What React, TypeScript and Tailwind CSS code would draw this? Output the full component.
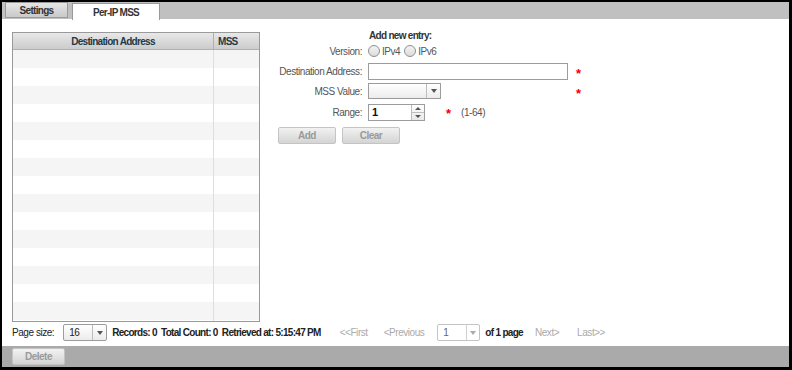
import React from "react";

const font = { fontFamily: '"Liberation Sans", Arial, sans-serif' };

function Star({ className = "" }: { className?: string }) {
  return <span className={"text-[#e00] text-[13px] font-bold leading-none tracking-normal " + className}>*</span>;
}

function Radio({ label }: { label: string }) {
  return (
    <span className="flex items-center gap-[2px]">
      <span className="w-[12px] h-[12px] rounded-full border border-[#8f8f8f] bg-gradient-to-b from-[#f4f4f4] to-[#dcdcdc]" />
      <span>{label}</span>
    </span>
  );
}

function Btn({ label, className = "" }: { label: string; className?: string }) {
  return (
    <div
      className={
        "h-[17px] flex items-center justify-center rounded-[2px] border border-[#c4c4c4] bg-gradient-to-b from-[#f2f2f2] to-[#d4d4d4] text-[#9a9a9a] font-bold tracking-[-0.5px] text-[10px] " +
        className
      }
    >
      {label}
    </div>
  );
}

export default function App() {
  const rows = Array.from({ length: 16 });
  return (
    <div className="w-[792px] h-[370px] bg-black pt-[2px] pl-[2px] pr-[3px] pb-[3px] text-[10px] tracking-[-0.45px] text-[#333] whitespace-nowrap" style={font}>
      <div className="w-full h-full flex flex-col bg-white">
        {/* tab bar */}
        <div className="h-[17px] bg-[#c0c0c0] flex items-end pl-[3px] gap-[4px]">
          <div className="w-[63px] h-[16px] mb-[1px] flex items-center justify-center border border-[#9a9a9a] bg-gradient-to-b from-[#e6e6e6] to-[#c9c9c9] font-bold tracking-[-0.7px] text-[#333]">
            Settings
          </div>
          <div className="w-[88px] h-[17px] -mb-[1px] flex items-center justify-center border border-b-0 border-[#9a9a9a] bg-white font-bold tracking-[-0.7px] text-[#333] relative">
            Per-IP MSS
          </div>
        </div>
        {/* content */}
        <div className="flex-1 flex flex-col pl-[10px] pt-[13px]">
          <div className="flex">
            {/* table */}
            <div className="w-[248px] h-[290px] border border-[#9a9a9a] overflow-hidden flex flex-col shrink-0">
              <div className="h-[17px] flex bg-gradient-to-b from-[#e8e8e8] to-[#cccccc] border-b border-[#b0b0b0] font-bold tracking-[-0.7px] text-[#1e3a48] shrink-0">
                <div className="w-[201px] flex items-center justify-center border-r border-[#b0b0b0]">Destination Address</div>
                <div className="flex-1 flex items-center pl-[4px]">MSS</div>
              </div>
              {rows.map((_, i) => (
                <div key={i} className={"h-[18px] flex shrink-0 " + (i % 2 === 0 ? "bg-[#f5f5f5]" : "bg-white")}>
                  <div className="w-[201px] border-r border-[#dedede]" />
                  <div className="flex-1" />
                </div>
              ))}
            </div>
            {/* form */}
            <div className="ml-[10px] flex flex-col">
              <div className="flex">
                <div className="w-[92px]" />
                <div className="font-bold tracking-[-0.7px] ml-[7px] h-[10px] leading-[10px] -mt-[1px]">Add new entry:</div>
              </div>
              <div className="flex items-center h-[16px] mt-[2px]">
                <div className="w-[92px] text-right text-[#555]">Version:</div>
                <div className="ml-[6px] flex items-center gap-[4px] text-[#555]">
                  <Radio label="IPv4" />
                  <Radio label="IPv6" />
                </div>
              </div>
              <div className="flex items-center h-[17px] mt-[4px]">
                <div className="w-[92px] text-right text-[#555]">Destination Address:</div>
                <div className="ml-[6px] w-[200px] h-[17px] border border-[#9c9c9c] bg-white" />
                <Star className="ml-[8px] mt-[4px]" />
              </div>
              <div className="flex items-center h-[16px] mt-[3px]">
                <div className="w-[92px] text-right text-[#555]">MSS Value:</div>
                <div className="ml-[6px] w-[73px] h-[16px] border border-[#9c9c9c] flex bg-gradient-to-b from-white to-[#ececec]">
                  <div className="flex-1" />
                  <div className="w-[14px] border-l border-[#bdbdbd] flex items-center justify-center">
                    <span className="w-0 h-0 border-l-[3px] border-r-[3px] border-t-[4px] border-l-transparent border-r-transparent border-t-[#555]" />
                  </div>
                </div>
                <Star className="ml-[135px] mt-[4px]" />
              </div>
              <div className="flex items-center h-[17px] mt-[5px]">
                <div className="w-[92px] text-right text-[#555]">Range:</div>
                <div className="ml-[6px] w-[57px] h-[17px] border border-[#9c9c9c] flex bg-white">
                  <div className="flex-1 font-bold text-[#111] pl-[3px] flex items-center text-[11px]">1</div>
                  <div className="w-[13px] border-l border-[#bdbdbd] flex flex-col bg-gradient-to-b from-white to-[#e8e8e8]">
                    <div className="flex-1 flex items-center justify-center border-b border-[#bdbdbd]">
                      <span className="w-0 h-0 border-l-[3px] border-r-[3px] border-b-[3px] border-l-transparent border-r-transparent border-b-[#555]" />
                    </div>
                    <div className="flex-1 flex items-center justify-center">
                      <span className="w-0 h-0 border-l-[3px] border-r-[3px] border-t-[3px] border-l-transparent border-r-transparent border-t-[#555]" />
                    </div>
                  </div>
                </div>
                <Star className="ml-[21px] mt-[2px]" />
                <div className="ml-[10px] text-[#555]">(1-64)</div>
              </div>
              <div className="flex gap-[6px] mt-[6px] ml-[8px]">
                <Btn label="Add" className="w-[58px]" />
                <Btn label="Clear" className="w-[58px]" />
              </div>
            </div>
          </div>
          {/* pagination */}
          <div className="flex items-center h-[17px] mt-[2px] text-[#222]">
            <span>Page size:</span>
            <div className="ml-[9px] w-[44px] h-[17px] border border-[#9c9c9c] rounded-[2px] flex bg-gradient-to-b from-white to-[#ececec]">
              <div className="flex-1 pl-[5px] flex items-center">16</div>
              <div className="w-[14px] border-l border-[#bdbdbd] flex items-center justify-center">
                <span className="w-0 h-0 border-l-[3px] border-r-[3px] border-t-[4px] border-l-transparent border-r-transparent border-t-[#555]" />
              </div>
            </div>
            <span className="ml-[5px] font-bold tracking-[-0.7px]">Records: 0&nbsp;&nbsp;Total Count: 0&nbsp;&nbsp;Retrieved at: 5:15:47 PM</span>
            <span className="ml-[19px] text-[#aaa]">&lt;&lt;First</span>
            <span className="ml-[16px] text-[#aaa]">&lt;Previous</span>
            <div className="ml-[13px] w-[43px] h-[17px] border border-[#c4c4c4] rounded-[2px] flex">
              <div className="flex-1 pl-[5px] flex items-center text-[#666]">1</div>
              <div className="w-[13px] border-l border-[#d0d0d0] flex items-center justify-center">
                <span className="w-0 h-0 border-l-[3px] border-r-[3px] border-t-[4px] border-l-transparent border-r-transparent border-t-[#aaa]" />
              </div>
            </div>
            <span className="ml-[5px] font-bold tracking-[-0.7px]">of 1 page</span>
            <span className="ml-[12px] text-[#aaa]">Next&gt;</span>
            <span className="ml-[18px] text-[#aaa]">Last&gt;&gt;</span>
          </div>
        </div>
        {/* footer */}
        <div className="h-[21px] bg-[#aaaaaa] flex items-center pl-[10px] mt-[3px]">
          <Btn label="Delete" className="w-[53px] h-[16px]" />
        </div>
      </div>
    </div>
  );
}
